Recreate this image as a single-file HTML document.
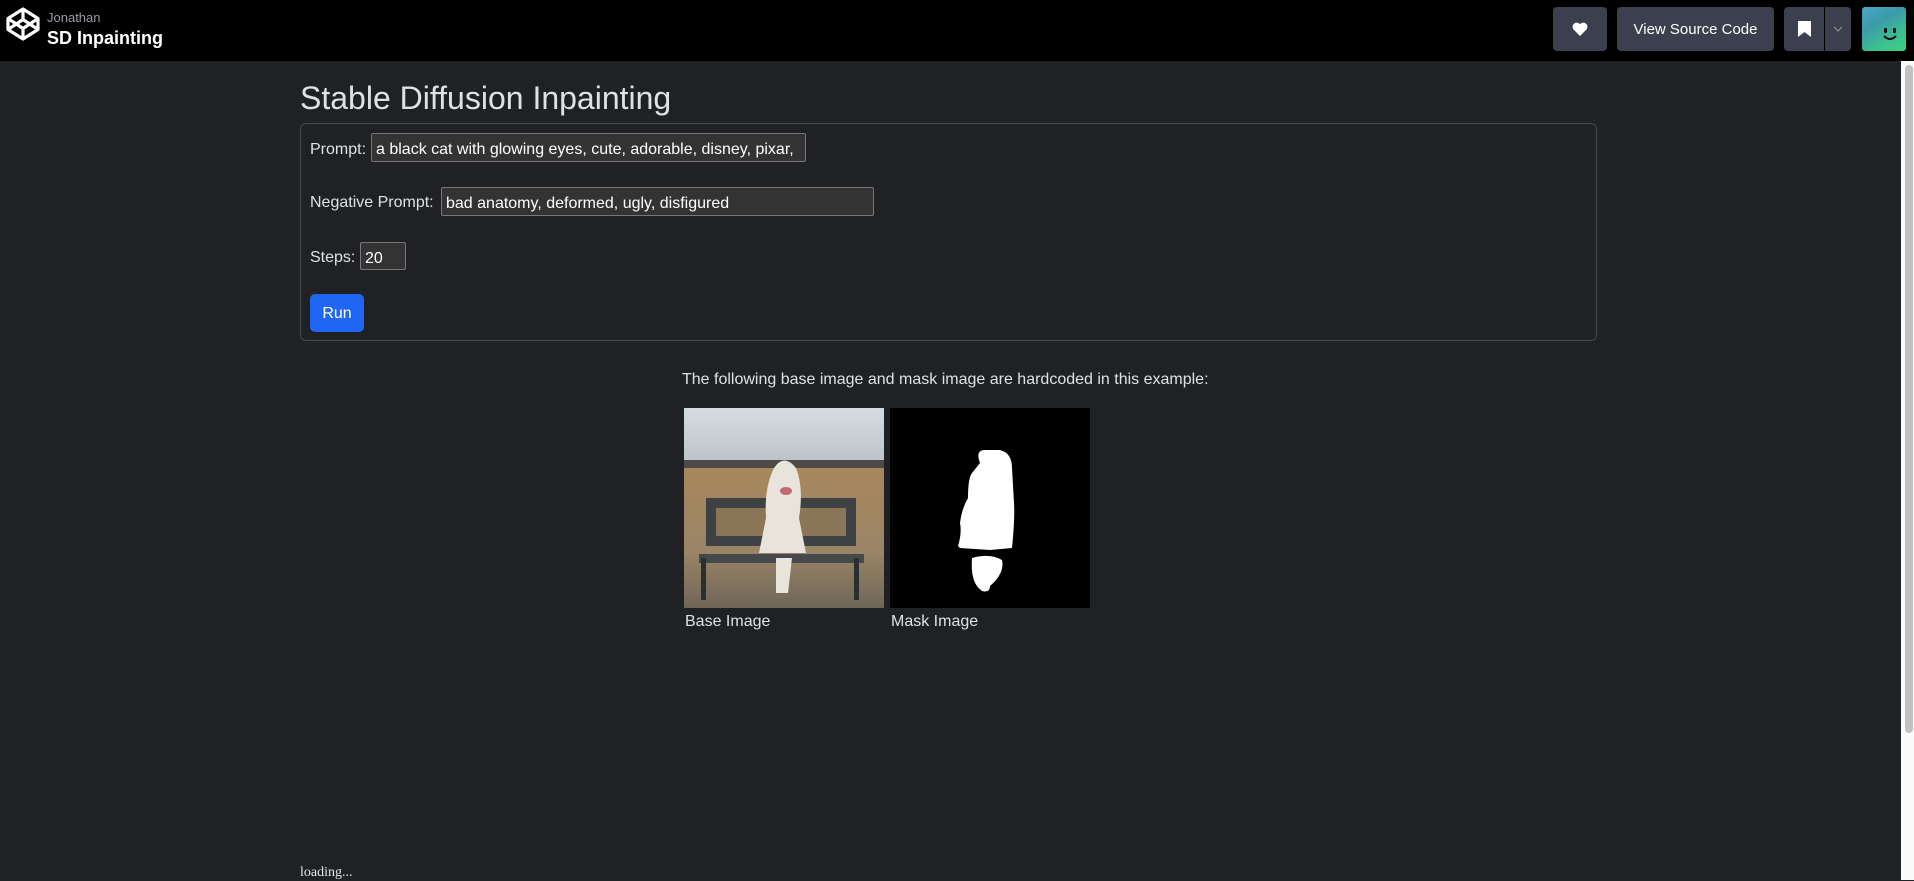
<!DOCTYPE html>
<html><head><meta charset="utf-8"><style>
*{box-sizing:border-box;margin:0;padding:0}
body{width:1914px;height:880px;overflow:hidden;background:#1f2124;font-family:"Liberation Sans",sans-serif;color:#dee2e6;position:relative}
.hdr{position:absolute;left:0;top:0;width:1914px;height:61px;background:#000}
.abs{position:absolute}
.btn{position:absolute;top:7px;height:44px;background:#3c3f4d;border-radius:4px;color:#fff}
.inp{position:absolute;background:#333;border:1px solid #777;border-radius:2px;color:#fff;font-size:16px;padding-left:4px;padding-top:2px;line-height:27px;white-space:nowrap;overflow:hidden}
.lbl{position:absolute;font-size:16px;color:#dee2e6}
</style></head><body>
<div class="hdr">
<svg class="abs" style="left:6px;top:7px" width="34" height="34" viewBox="0 0 34 34" fill="none" stroke="#fff" stroke-width="3.2" stroke-linejoin="round">
<path d="M17 2 L32 11.5 L32 22.5 L17 32 L2 22.5 L2 11.5 Z"/><path d="M2 11.5 L17 21.5 L32 11.5 M2 22.5 L17 12.5 L32 22.5 M17 2 V12.5 M17 21.5 V32"/></svg>
<div class="abs" style="left:47px;top:10px;font-size:13px;color:#9a9ba6">Jonathan</div>
<div class="abs" style="left:47px;top:28px;font-size:18px;font-weight:bold;color:#fff">SD Inpainting</div>
<div class="btn" style="left:1553px;width:54px"><svg class="abs" style="left:19px;top:15px" width="16" height="14" viewBox="0 0 16 14"><path fill="#fff" d="M8 14 L1.5 7.5 A4 4 0 0 1 8 2.2 A4 4 0 0 1 14.5 7.5 Z"/></svg></div>
<div class="btn" style="left:1617px;width:157px;font-size:15px;text-align:center;line-height:46px">View Source Code</div>
<div class="btn" style="left:1784px;width:67px"><div class="abs" style="left:40px;top:0;width:1px;height:44px;background:#000"></div>
<svg class="abs" style="left:14px;top:14px" width="13" height="16" viewBox="0 0 13 16"><path fill="#fff" d="M0 0H13V16L6.5 11L0 16Z"/></svg>
<svg class="abs" style="left:49px;top:19px" width="10" height="6" viewBox="0 0 10 6"><path d="M1 1L5 5L9 1" stroke="#888" stroke-width="1.3" fill="none"/></svg></div>
<div class="abs" style="left:1862px;top:7px;width:44px;height:44px;border-radius:3px;background:linear-gradient(150deg,#4aa6c6 0%,#3c9aa8 35%,#3cbf90 70%,#3ad27a 100%)">
<div class="abs" style="left:22px;top:21px;width:3px;height:5px;background:#111;border-radius:1px"></div><div class="abs" style="left:31px;top:21px;width:3px;height:5px;background:#111;border-radius:1px"></div>
<svg class="abs" style="left:20px;top:27px" width="16" height="8"><path d="M2 2Q8 8 14 2" stroke="#111" stroke-width="2" fill="none"/></svg></div>
</div>
<div class="abs" style="left:1901px;top:61px;width:13px;height:819px;background:#fafafa"></div>
<div class="abs" style="left:1905px;top:65px;width:8px;height:668px;background:#c1c1c1;border-radius:4px"></div>

<div class="abs" style="left:300px;top:80px;font-size:32px;color:#dee2e6">Stable Diffusion Inpainting</div>
<div class="abs" style="left:300px;top:123px;width:1297px;height:218px;border:1px solid #45484c;border-radius:6px"></div>
<div class="lbl" style="left:310px;top:141px">Prompt:</div>
<div class="inp" style="left:371px;top:133px;width:435px;height:29px">a black cat with glowing eyes, cute, adorable, disney, pixar,</div>
<div class="lbl" style="left:310px;top:194px">Negative Prompt:</div>
<div class="inp" style="left:441px;top:187px;width:433px;height:29px">bad anatomy, deformed, ugly, disfigured</div>
<div class="lbl" style="left:310px;top:249px">Steps:</div>
<div class="inp" style="left:360px;top:242px;width:46px;height:28px">20</div>
<div class="abs" style="left:310px;top:294px;width:54px;height:38px;background:#1f66f5;border-radius:5px;color:#fff;font-size:16px;text-align:center;line-height:40px">Run</div>

<div class="lbl" style="left:682px;top:371px">The following base image and mask image are hardcoded in this example:</div>
<svg class="abs" style="left:684px;top:408px" width="200" height="200" viewBox="0 0 200 200">
<defs><linearGradient id="sk" x1="0" y1="0" x2="0" y2="1"><stop offset="0" stop-color="#d6dde2"/><stop offset="1" stop-color="#b9c1c6"/></linearGradient>
<linearGradient id="fd" x1="0" y1="0" x2="0" y2="1"><stop offset="0" stop-color="#a8875c"/><stop offset=".6" stop-color="#9a8567"/><stop offset="1" stop-color="#6f6657"/></linearGradient></defs>
<rect width="200" height="60" fill="url(#sk)"/><rect y="52" width="200" height="12" fill="#4d4a47"/>
<rect y="60" width="200" height="140" fill="url(#fd)"/>
<rect x="22" y="90" width="150" height="48" fill="#3f4244"/><rect x="32" y="100" width="130" height="28" fill="#8a7557"/>
<rect x="15" y="146" width="165" height="9" fill="#45494b"/>
<rect x="17" y="150" width="5" height="42" fill="#2b2d2e"/><rect x="170" y="150" width="5" height="42" fill="#2b2d2e"/>
<path d="M90 60 Q100 45 112 60 Q120 80 115 110 L122 145 L75 145 L82 110 Q80 80 90 60Z M92 150 L108 150 L104 185 L92 185Z" fill="#e8e4dc"/>
<ellipse cx="102" cy="83" rx="6" ry="4" fill="#c06a78"/>
</svg>
<svg class="abs" style="left:890px;top:408px" width="200" height="200" viewBox="0 0 200 200"><rect width="200" height="200" fill="#000"/>
<path d="M90 55 Q85 42 95 42 L110 42 Q122 45 122 60 L124 95 Q125 110 122 140 L100 142 L70 140 L68 138 Q72 125 70 115 Q72 100 78 90 Q78 70 82 65Z" fill="#fff"/>
<path d="M82 150 Q100 145 112 152 Q115 165 100 178 Q100 185 92 183 Q80 175 82 150Z" fill="#fff"/></svg>
<div class="lbl" style="left:685px;top:613px">Base Image</div>
<div class="lbl" style="left:891px;top:613px">Mask Image</div>
<div class="abs" style="left:300px;top:865px;font-family:'Liberation Serif',serif;font-size:14px;color:#e6e6e6">loading...</div>
</body></html>
